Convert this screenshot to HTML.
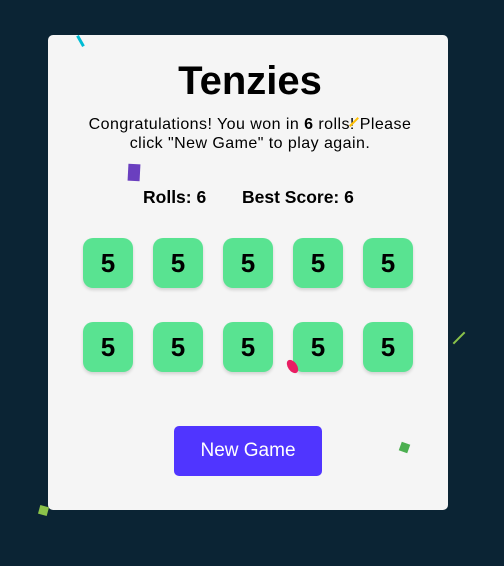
<!DOCTYPE html>
<html><head><style>
body{margin:0;width:504px;height:566px;background:#0b2434;position:relative;overflow:hidden;font-family:"Liberation Sans",sans-serif}
.card{position:absolute;left:48px;top:35px;width:400px;height:475px;background:#f5f5f5;border-radius:5px}
h1{position:absolute;left:0;right:4px;top:58px;margin:0;text-align:center;font-size:40px;font-weight:bold;line-height:46px}
.msg{position:absolute;left:75px;width:350px;top:115px;text-align:center;font-size:16px;line-height:19px;margin:0;letter-spacing:0.45px}
.sc{position:absolute;top:187px;font-size:17.5px;font-weight:bold;line-height:20px}
.d{position:absolute;width:50px;height:50px;border-radius:10px;background:#59e391;box-shadow:0 2px 3px rgba(0,0,0,.15);font-size:26px;font-weight:bold;text-align:center;line-height:50px}
.btn{position:absolute;left:174px;top:426px;width:148px;height:50px;background:#5035ff;border-radius:5px;color:#fff;font-size:19px;text-align:center;line-height:50px}
.c{position:absolute}
</style></head><body>
<div class="card"></div>
<h1>Tenzies</h1>
<p class="msg">Congratulations! You won in <b>6</b> rolls! Please click "New Game" to play again.</p>
<div class="sc" style="left:143px">Rolls: 6</div>
<div class="sc" style="left:242px">Best Score: 6</div>
<div class="d" style="left:83px;top:238px">5</div>
<div class="d" style="left:153px;top:238px">5</div>
<div class="d" style="left:223px;top:238px">5</div>
<div class="d" style="left:293px;top:238px">5</div>
<div class="d" style="left:363px;top:238px">5</div>
<div class="d" style="left:83px;top:322px">5</div>
<div class="d" style="left:153px;top:322px">5</div>
<div class="d" style="left:223px;top:322px">5</div>
<div class="d" style="left:293px;top:322px">5</div>
<div class="d" style="left:363px;top:322px">5</div>
<div class="btn">New Game</div>
<div class="c" style="left:128px;top:164px;width:12px;height:17px;background:#6a3fbf;transform:rotate(3deg)"></div>
<div class="c" style="left:288px;top:359px;width:9px;height:15px;background:#e91e63;border-radius:50%;transform:rotate(-35deg)"></div>
<div class="c" style="left:400px;top:443px;width:9px;height:9px;background:#4caf50;transform:rotate(20deg)"></div>
<div class="c" style="left:39px;top:506px;width:9px;height:9px;background:#8bc34a;transform:rotate(15deg)"></div>
<div class="c" style="left:79px;top:35px;width:3px;height:12px;background:#00bcd4;transform:rotate(-30deg)"></div>
<div class="c" style="left:458px;top:330px;width:2px;height:16px;background:#8bc34a;transform:rotate(45deg)"></div>
<div class="c" style="left:353px;top:116px;width:2px;height:12px;background:#ffc107;transform:rotate(45deg)"></div>
</body></html>
